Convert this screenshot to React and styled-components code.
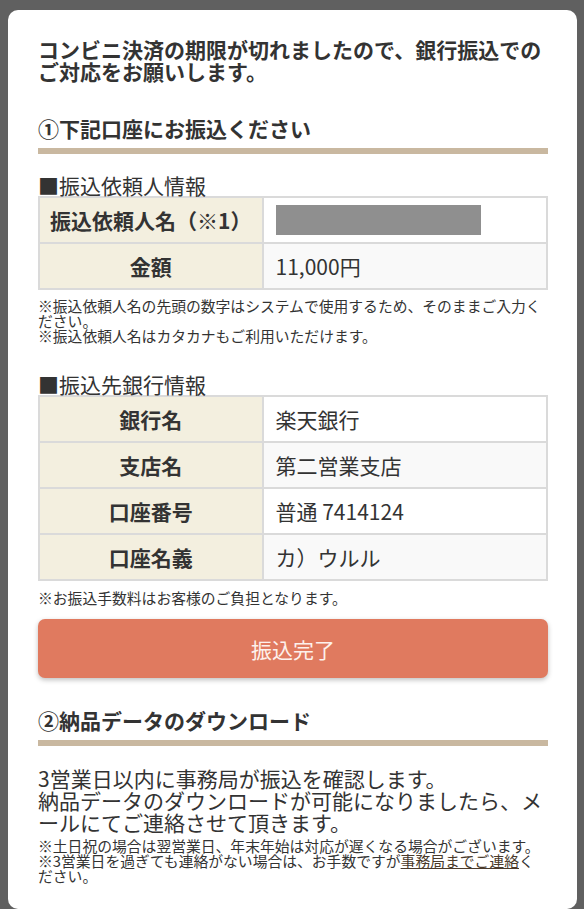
import React from "react";
import styled, { createGlobalStyle } from "styled-components";

const GlobalStyle = createGlobalStyle`
  html, body {
    margin: 0;
    padding: 0;
    overflow: hidden;
    background: #606060;
  }
  body {
    font-family: "Noto Sans CJK JP", "Noto Sans", sans-serif;
    color: #333;
  }
`;

const Page = styled.div`
  padding: 10px 7px 0 8px;
`;

const Card = styled.div`
  background: #fff;
  border-radius: 10px;
  padding: 28px 29px 26px 30px;
  min-height: 860px;
  box-sizing: border-box;
`;

const Title = styled.h1`
  margin: 0;
  font-size: 21px;
  line-height: 22px;
  font-weight: 700;
`;

const SectionTitle = styled.h2`
  margin: ${(p) => p.$top || 35}px 0 0;
  font-size: 21px;
  line-height: 22px;
  font-weight: 700;
  padding-bottom: 9px;
  border-bottom: 6px solid #c9b8a0;
`;

const SubTitle = styled.h3`
  margin: ${(p) => p.$top || 20}px 0 0;
  font-size: 21px;
  line-height: 22px;
  font-weight: 400;
`;

const Table = styled.table`
  width: 100%;
  border-collapse: collapse;
  border: 2px solid #dadada;
`;

const Head = styled.th`
  width: 44%;
  height: 44px;
  padding: 0;
  border: 2px solid #dadada;
  background: #f3efdf;
  font-size: 21px;
  font-weight: 700;
  text-align: center;
  line-height: 1;
`;

const Value = styled.td`
  height: 44px;
  padding: 0 12px;
  border: 2px solid #dadada;
  background: ${(p) => (p.$alt ? "#f9f9f9" : "#fff")};
  font-size: 21px;
  line-height: 1;
`;

const Masked = styled.div`
  width: 205px;
  height: 30px;
  background: #8f8f8f;
`;

const Notes = styled.p`
  margin: ${(p) => p.$top || 8}px 0 0;
  font-size: 14.8px;
  line-height: 15px;
`;

const Button = styled.button`
  display: flex;
  align-items: center;
  justify-content: center;
  width: 100%;
  height: 59px;
  margin-top: 14px;
  border: none;
  border-radius: 7px;
  background: #e07a5f;
  box-shadow: 0 2px 5px rgba(0, 0, 0, 0.25);
  color: #fdf1ec;
  font-family: inherit;
  font-size: 21px;
  cursor: pointer;
`;

const Body = styled.p`
  margin: 21px 0 0;
  font-size: 21px;
  line-height: 22px;
`;

const Link = styled.a`
  color: #4a3a2b;
  text-decoration: underline;
`;

const requester = [
  { label: "振込依頼人名（※1）", masked: true },
  { label: "金額", value: "11,000円" },
];

const bank = [
  { label: "銀行名", value: "楽天銀行" },
  { label: "支店名", value: "第二営業支店" },
  { label: "口座番号", value: "普通 7414124" },
  { label: "口座名義", value: "カ）ウルル" },
];

const InfoTable = ({ rows }) => (
  <Table>
    <tbody>
      {rows.map((r, i) => (
        <tr key={r.label}>
          <Head>{r.label}</Head>
          <Value $alt={i % 2 === 1}>{r.masked ? <Masked /> : r.value}</Value>
        </tr>
      ))}
    </tbody>
  </Table>
);

export default function App() {
  return (
    <Page>
      <GlobalStyle />
      <Card>
        <Title>コンビニ決済の期限が切れましたので、銀行振込でのご対応をお願いします。</Title>

        <SectionTitle>①下記口座にお振込ください</SectionTitle>

        <SubTitle>■振込依頼人情報</SubTitle>
        <InfoTable rows={requester} />
        <Notes>
          ※振込依頼人名の先頭の数字はシステムで使用するため、そのままご入力ください。
          <br />
          ※振込依頼人名はカタカナもご利用いただけます。
        </Notes>

        <SubTitle $top={30}>■振込先銀行情報</SubTitle>
        <InfoTable rows={bank} />
        <Notes $top={9}>※お振込手数料はお客様のご負担となります。</Notes>

        <Button>振込完了</Button>

        <SectionTitle $top={31}>②納品データのダウンロード</SectionTitle>
        <Body>
          3営業日以内に事務局が振込を確認します。
          <br />
          納品データのダウンロードが可能になりましたら、メールにてご連絡させて頂きます。
        </Body>
        <Notes $top={5}>
          ※土日祝の場合は翌営業日、年末年始は対応が遅くなる場合がございます。
          <br />
          ※3営業日を過ぎても連絡がない場合は、お手数ですが<Link href="#">事務局までご連絡</Link>ください。
        </Notes>
      </Card>
    </Page>
  );
}
